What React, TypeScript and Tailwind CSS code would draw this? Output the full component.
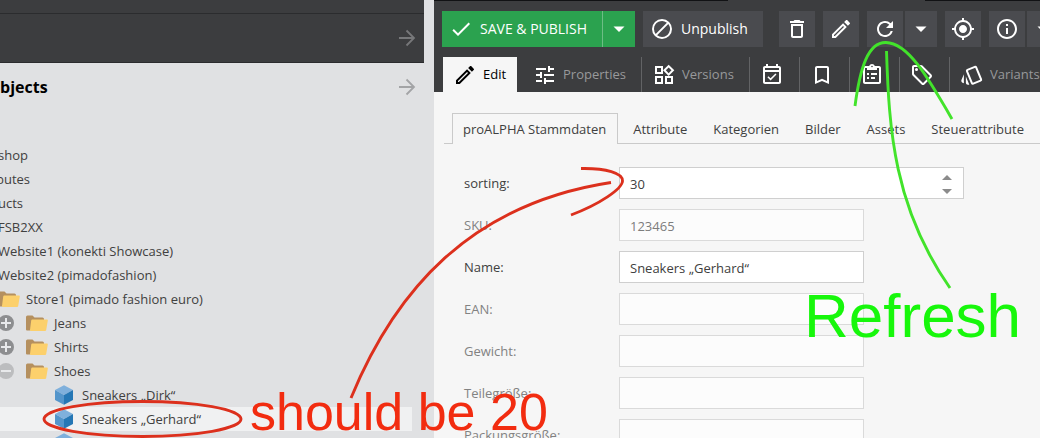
import React from "react";

type IconProps = { d: string; className?: string };

function Icon({ d, className = "size-6" }: IconProps) {
  return (
    <svg viewBox="0 0 24 24" fill="currentColor" aria-hidden="true" className={`shrink-0 ${className}`}>
      <path d={d} />
    </svg>
  );
}

const paths = {
  check: "M9 16.17L4.83 12l-1.42 1.41L9 19 21 7l-1.41-1.41z",
  edit: "M14.06 9.02l.92.92L5.92 19H5v-.92l9.06-9.06M17.66 3c-.25 0-.51.1-.7.29l-1.83 1.83 3.75 3.75 1.83-1.83a.996.996 0 0 0 0-1.41l-2.34-2.34c-.2-.2-.45-.29-.71-.29zm-3.6 3.19L3 17.25V21h3.75L17.81 9.94l-3.75-3.75z",
  trash: "M16 9v10H8V9h8m-1.5-6h-5l-1 1H5v2h14V4h-3.5l-1-1zM18 7H6v12c0 1.1.9 2 2 2h8c1.1 0 2-.9 2-2V7z",
  refresh: "M17.65 6.35A7.958 7.958 0 0 0 12 4c-4.42 0-7.99 3.58-7.99 8s3.57 8 7.99 8c3.73 0 6.84-2.55 7.73-6h-2.08A5.99 5.99 0 0 1 12 18c-3.31 0-6-2.69-6-6s2.69-6 6-6c1.66 0 3.14.69 4.22 1.78L13 11h7V4l-2.35 2.35z",
  locate: "M12 8c-2.21 0-4 1.79-4 4s1.79 4 4 4 4-1.79 4-4-1.79-4-4-4zm8.94 3A8.994 8.994 0 0 0 13 3.06V1h-2v2.06A8.994 8.994 0 0 0 3.06 11H1v2h2.06A8.994 8.994 0 0 0 11 20.94V23h2v-2.06A8.994 8.994 0 0 0 20.94 13H23v-2h-2.06zM12 19c-3.87 0-7-3.13-7-7s3.13-7 7-7 7 3.13 7 7-3.13 7-7 7z",
  info: "M11 7h2v2h-2zm0 4h2v6h-2zm1-9C6.48 2 2 6.48 2 12s4.48 10 10 10 10-4.48 10-10S17.52 2 12 2zm0 18c-4.41 0-8-3.59-8-8s3.59-8 8-8 8 3.59 8 8-3.59 8-8 8z",
  block: "M12 2a10 10 0 1 0 0 20a10 10 0 0 0 0-20zM4 12a8 8 0 0 1 12.9-6.31L5.69 16.9A7.9 7.9 0 0 1 4 12zm8 8a7.9 7.9 0 0 1-4.9-1.69L18.31 7.1A8 8 0 0 1 12 20z",
  caret: "M6.500 9.500l5.500 5.500 5.500-5.500z",
  tune: "M3 17v2h6v-2H3zM3 5v2h10V5H3zm10 16v-2h8v-2h-8v-2h-2v6h2zM7 9v2H3v2h4v2h2V9H7zm14 4v-2H11v2h10zm-6-4h2V7h4V5h-4V3h-2v6z",
  widgets: "M16.66 4.52l2.83 2.83-2.83 2.83-2.83-2.83 2.83-2.83M9 5v4H5V5h4m10 10v4h-4v-4h4M9 15v4H5v-4h4m7.66-13.31L11 7.34 16.66 13l5.66-5.66-5.66-5.65zM11 3H3v8h8V3zm10 10h-8v8h8v-8zm-10 0H3v8h8v-8z",
  calendar: "M19 3h-1V1h-2v2H8V1H6v2H5c-1.11 0-2 .9-2 2v14c0 1.1.89 2 2 2h14c1.1 0 2-.9 2-2V5c0-1.1-.9-2-2-2zm0 16H5V9h14v10zM5 7V5h14v2H5zm5.56 10.46l5.93-5.93-1.06-1.06-4.87 4.87-2.11-2.11-1.06 1.06z",
  bookmark: "M17 3H7c-1.1 0-2 .9-2 2v16l7-3 7 3V5c0-1.1-.9-2-2-2zm0 15l-5-2.18L7 18V5h10v13z",
  clipboard: "M19 3h-4.18C14.4 1.84 13.3 1 12 1s-2.4.84-2.82 2H5c-1.1 0-2 .9-2 2v14c0 1.1.9 2 2 2h14c1.1 0 2-.9 2-2V5c0-1.1-.9-2-2-2zm0 16H5V5h2v2h10V5h2v14zM12 2.7a.8.8 0 1 1 0 1.6a.8.8 0 0 1 0-1.6zM7 10h2v2H7zm4 0h6v2h-6zm-4 4h2v2H7zm4 0h4v2h-4z",
  tag: "M21.41 11.58l-9-9C12.05 2.22 11.55 2 11 2H4c-1.1 0-2 .9-2 2v7c0 .55.22 1.05.59 1.42l9 9c.36.36.86.58 1.41.58s1.05-.22 1.41-.59l7-7c.37-.36.59-.86.59-1.41s-.23-1.06-.59-1.42zM13 20.01L4 11V4h7v-.01l9 9-7 7.02zM6.5 5a1.5 1.5 0 1 1 0 3a1.5 1.5 0 0 1 0-3z",
  variants: "M2.53 19.65l1.34.56v-9.03l-2.43 5.86c-.41 1.02.08 2.19 1.09 2.61zm19.5-3.7L17.07 3.98a2.013 2.013 0 0 0-1.81-1.23c-.26 0-.53.04-.79.15L7.1 5.95a1.999 1.999 0 0 0-1.08 2.6l4.96 11.97a1.998 1.998 0 0 0 2.6 1.08l7.36-3.05a1.994 1.994 0 0 0 1.09-2.6zm-9.2 3.8L7.87 7.79l7.35-3.04h.01l4.95 11.95-7.35 3.05zM5.88 19.75c0 1.1.9 2 2 2h1.45l-3.45-8.34v6.34z",
};

function ArrowRight() {
  return (
    <svg viewBox="0 0 18 18" fill="none" stroke="currentColor" strokeWidth="1.8" aria-hidden="true" className="size-[18px]">
      <path d="M1 9h15M8.5 1.5L16 9l-7.5 7.5" />
    </svg>
  );
}

function Folder() {
  return (
    <svg viewBox="0 0 22 18" aria-hidden="true" className="h-[18px] w-[22px] shrink-0">
      <path d="M0 3q0-1.500 1.500-1.500h5l2 2h8q1.500 0 1.500 1.500v5l-14 6.500h-3q-1 0-1-1z" fill="#b5905f" />
      <path d="M5.200 5.500h15.800q1 0 .800 1l-1.600 9.500q-.200 1-1.200 1h-14q-1.200 0-1-1l1.200-9.500q.200-1 1-1z" fill="#fcd06c" />
    </svg>
  );
}

function Cube() {
  return (
    <svg viewBox="0 0 18 20" aria-hidden="true" className="h-5 w-[18px] shrink-0">
      <path d="M9 .3l9 4.700-9 5-9-5z" fill="#7fb0dc" />
      <path d="M0 5l9 5v9.700l-9-4.700z" fill="#5395cb" />
      <path d="M18 5l-9 5v9.700l9-4.700z" fill="#2577b5" />
    </svg>
  );
}

function Toggle({ open, name }: { open?: boolean; name: string }) {
  return (
    <button type="button" aria-label={name} className={open ? "text-[#bcbdbf]" : "text-[#8d8e90]"}>
      <svg viewBox="0 0 16 16" aria-hidden="true" className="size-4">
        <circle cx="8" cy="8" r="8" fill="currentColor" />
        <path d={open ? "M3 8h10" : "M3 8h10M8 3v10"} stroke="#e8e9eb" strokeWidth="2" />
      </svg>
    </button>
  );
}

const row = "flex h-6 shrink-0 items-center whitespace-nowrap";

function Text({ children }: { children: React.ReactNode }) {
  return <span className="pt-0.5">{children}</span>;
}

function FolderRow({ name, open }: { name: string; open?: boolean }) {
  return (
    <div className={`${row} -ml-0.5`}>
      <Toggle name={name} open={open} />
      <span className="ml-3 flex items-center gap-1.5"><Folder /><Text>{name}</Text></span>
    </div>
  );
}

function Sidebar() {
  return (
    <aside className="flex w-[424px] shrink-0 flex-col overflow-hidden bg-[#e0e1e3]">
      <div className="h-[14px] shrink-0 border-b border-[#2b2c2e] bg-[#3c3d3f]" />
      <div className="flex h-[49px] shrink-0 items-center justify-end border-b border-[#2b2c2e] bg-[#3c3d3f] pr-2 text-[#77787a]">
        <button type="button" aria-label="Expand"><ArrowRight /></button>
      </div>
      <div className="flex h-12 shrink-0 items-center justify-between pr-2">
        <h2 className="text-base font-bold text-black">bjects</h2>
        <button type="button" aria-label="Expand objects" className="text-[#a3a4a6]"><ArrowRight /></button>
      </div>
      <div className="mt-8 mr-3 flex flex-col text-[13px] text-[#404040]">
        <div className={`${row} -ml-0.5`}><Text>shop</Text></div>
        <div className={`${row} -ml-1`}><Text>butes</Text></div>
        <div className={`${row} -ml-0.5`}><Text>ucts</Text></div>
        <div className={`${row} -ml-0.5`}><Text>FSB2XX</Text></div>
        <div className={`${row} -ml-0.5`}><Text>Website1 (konekti Showcase)</Text></div>
        <div className={`${row} -ml-0.5`}><Text>Website2 (pimadofashion)</Text></div>
        <div className={`${row} -ml-0.5 gap-1.5`}><Folder /><Text>Store1 (pimado fashion euro)</Text></div>
        <FolderRow name="Jeans" />
        <FolderRow name="Shirts" />
        <FolderRow name="Shoes" open />
        <div className={`${row} gap-[9px] pl-[55px]`}><Cube /><Text>Sneakers „Dirk“</Text></div>
        <div className={`${row} gap-[9px] bg-[#f0f1f2] pl-[55px]`}><Cube /><Text>Sneakers „Gerhard“</Text></div>
        <div className={`${row} pl-[55px]`}><Cube /></div>
      </div>
    </aside>
  );
}

function Tool({ icon, name, className = "w-9" }: { icon: string; name: string; className?: string }) {
  return (
    <button type="button" aria-label={name} className={`flex h-9 shrink-0 items-center justify-center bg-[#4a4b4f] text-white ${className}`}>
      <Icon d={icon} />
    </button>
  );
}

function Toolbar() {
  return (
    <div className="flex items-center gap-2 overflow-hidden pt-[10px] pl-2 text-sm whitespace-nowrap text-white">
      <div className="flex shrink-0 bg-[#2ba24f]">
        <button type="button" className="flex h-9 w-40 items-center gap-[7px] pl-[7px]"><Icon d={paths.check} />SAVE &amp; PUBLISH</button>
        <button type="button" aria-label="Save options" className="flex h-9 w-[33px] items-center justify-center border-l border-[#6dbd85]"><Icon d={paths.caret} /></button>
      </div>
      <button type="button" className="mr-2 flex h-9 w-[120px] shrink-0 items-center gap-[7px] bg-[#4a4b4f] pl-[7px]"><Icon d={paths.block} />Unpublish</button>
      <Tool icon={paths.trash} name="Delete" />
      <Tool icon={paths.edit} name="Rename" />
      <div className="flex shrink-0 gap-0.5">
        <Tool icon={paths.refresh} name="Reload" />
        <Tool icon={paths.caret} name="Reload options" className="w-8" />
      </div>
      <Tool icon={paths.locate} name="Show in tree" />
      <div className="flex shrink-0 gap-0.5">
        <Tool icon={paths.info} name="Info" />
        <Tool icon={paths.caret} name="Info options" className="w-8" />
      </div>
    </div>
  );
}

const iconTabs = [
  { name: "Schedule", icon: paths.calendar },
  { name: "Bookmarks", icon: paths.bookmark },
  { name: "Notes", icon: paths.clipboard },
  { name: "Tags", icon: paths.tag },
];

function MainTabs() {
  return (
    <div role="tablist" className="mt-[10px] flex h-[35px] overflow-hidden pl-[9px] text-[13px] whitespace-nowrap text-[#98999b]">
      <button type="button" role="tab" aria-selected="true" className="flex w-[74px] shrink-0 items-center gap-1.5 bg-[#f6f6f6] pl-[10px] text-black"><Icon d={paths.edit} />Edit</button>
      <button type="button" role="tab" className="flex w-[125px] shrink-0 items-center gap-1.5 border-r border-[#626365] pl-4"><Icon d={paths.tune} className="size-6 text-white" />Properties</button>
      <button type="button" role="tab" className="flex w-[108px] shrink-0 items-center gap-1.5 border-r border-[#626365] pl-[10px]"><Icon d={paths.widgets} className="size-6 text-white" />Versions</button>
      {iconTabs.map((t) => (
        <button key={t.name} type="button" role="tab" aria-label={t.name} className="flex w-[50px] shrink-0 items-center border-r border-[#626365] pl-[10px] text-white"><Icon d={t.icon} /></button>
      ))}
      <button type="button" role="tab" className="flex shrink-0 items-center gap-1.5 pl-[10px]"><Icon d={paths.variants} className="size-6 text-white" />Variants</button>
    </div>
  );
}

const fields = [
  { id: "sku", label: "SKU:", value: "123465", locked: true },
  { id: "name", label: "Name:", value: "Sneakers „Gerhard“", locked: false },
  { id: "ean", label: "EAN:", value: "", locked: true },
  { id: "weight", label: "Gewicht:", value: "", locked: true },
  { id: "part", label: "Teilegröße:", value: "", locked: true },
  { id: "pack", label: "Packungsgröße:", value: "", locked: true },
];

function Form() {
  return (
    <form className="mt-[23px] flex flex-col gap-[10px] pl-[30px] text-[#404040]">
      <div className="flex h-8 shrink-0 items-center">
        <label htmlFor="sorting" className="w-[155px] shrink-0 pt-0.5">sorting:</label>
        <div className="flex h-8 w-[345px] items-center border border-[#cfcfcf] bg-white pr-[11px]">
          <input id="sorting" inputMode="numeric" defaultValue="30" className="h-full min-w-0 flex-1 px-[10px] pt-0.5 outline-none" />
          <div className="flex flex-col gap-[9px] pt-0.5 text-[#8b8b8b]">
            <button type="button" aria-label="Increase"><svg viewBox="0 0 10 5" aria-hidden="true" className="h-[5px] w-[10px]"><path d="M0 5l5-5 5 5z" fill="currentColor" /></svg></button>
            <button type="button" aria-label="Decrease"><svg viewBox="0 0 10 5" aria-hidden="true" className="h-[5px] w-[10px]"><path d="M0 0l5 5 5-5z" fill="currentColor" /></svg></button>
          </div>
        </div>
      </div>
      {fields.map((f) => (
        <div key={f.id} className="flex h-8 shrink-0 items-center">
          <label htmlFor={f.id} className={`w-[155px] shrink-0 pt-0.5 ${f.locked ? "text-[#828282]" : ""}`}>{f.label}</label>
          <input
            id={f.id}
            defaultValue={f.value}
            readOnly={f.locked}
            className={`h-8 w-[245px] border px-[10px] pt-0.5 outline-none ${f.locked ? "border-[#dadada] bg-[#fcfcfc] text-[#7d7d7d]" : "border-[#cfcfcf] bg-white"}`}
          />
        </div>
      ))}
    </form>
  );
}

function Annotations() {
  return (
    <div className="pointer-events-none absolute inset-0 overflow-hidden font-['Liberation_Sans',sans-serif] whitespace-nowrap">
      <svg viewBox="0 0 1040 438" fill="none" strokeWidth="2.900" aria-hidden="true" className="absolute top-0 left-0 h-[438px] w-[1040px]">
        <g stroke="#dc301d">
          <ellipse cx="142.500" cy="419" rx="98.500" ry="17.500" />
          <path d="M351 398C395 291 470 204 611 182.500" />
          <path d="M581 168.500C606 168 623 173 622.500 181C622 189 600 204 571 215" />
        </g>
        <g stroke="#42e32b">
          <path d="M855 106C860 68 868 42 886 42.500C908 43 927 76 952 119" />
          <path d="M886.500 51C889 130 894 208 950 288" />
        </g>
      </svg>
      <span className="absolute top-[382px] left-[250px] text-[52px] leading-[60px] text-[#f22c10]">should be 20</span>
      <span className="absolute top-[280px] left-[804px] text-[62px] leading-[72px] text-[#17f70b]">Refresh</span>
    </div>
  );
}

export default function App() {
  return (
    <div className="relative flex h-screen overflow-hidden bg-[#e0e1e3] font-['Open_Sans',sans-serif] text-[13px]">
      <Sidebar />
      <main className="ml-[10px] flex min-w-0 flex-1 flex-col overflow-hidden bg-[#f6f6f6]">
        <header className="bg-[#3c3d3f]">
          <div className="flex h-px justify-between">
            <div className="w-[294px] bg-[#111214]" />
            <div className="w-[115px] bg-[#111214]" />
          </div>
          <Toolbar />
          <MainTabs />
        </header>
        <div role="tablist" className="mt-[21px] ml-[10px] flex h-[31px] items-end whitespace-nowrap text-[#404040]">
          <span className="w-2 shrink-0 self-stretch border-b border-[#cacaca]" />
          <button type="button" role="tab" aria-selected="true" className="h-[31px] shrink-0 border border-b-0 border-[#cacaca] pt-0.5 pr-[11px] pl-[10px]">proALPHA Stammdaten</button>
          <div className="flex h-[31px] min-w-0 flex-1 gap-[26px] overflow-hidden border-b border-[#cacaca] pl-[15px]">
            {["Attribute", "Kategorien", "Bilder", "Assets", "Steuerattribute"].map((t) => (
              <button key={t} type="button" role="tab" className="pt-1">{t}</button>
            ))}
          </div>
        </div>
        <Form />
      </main>
      <Annotations />
    </div>
  );
}
